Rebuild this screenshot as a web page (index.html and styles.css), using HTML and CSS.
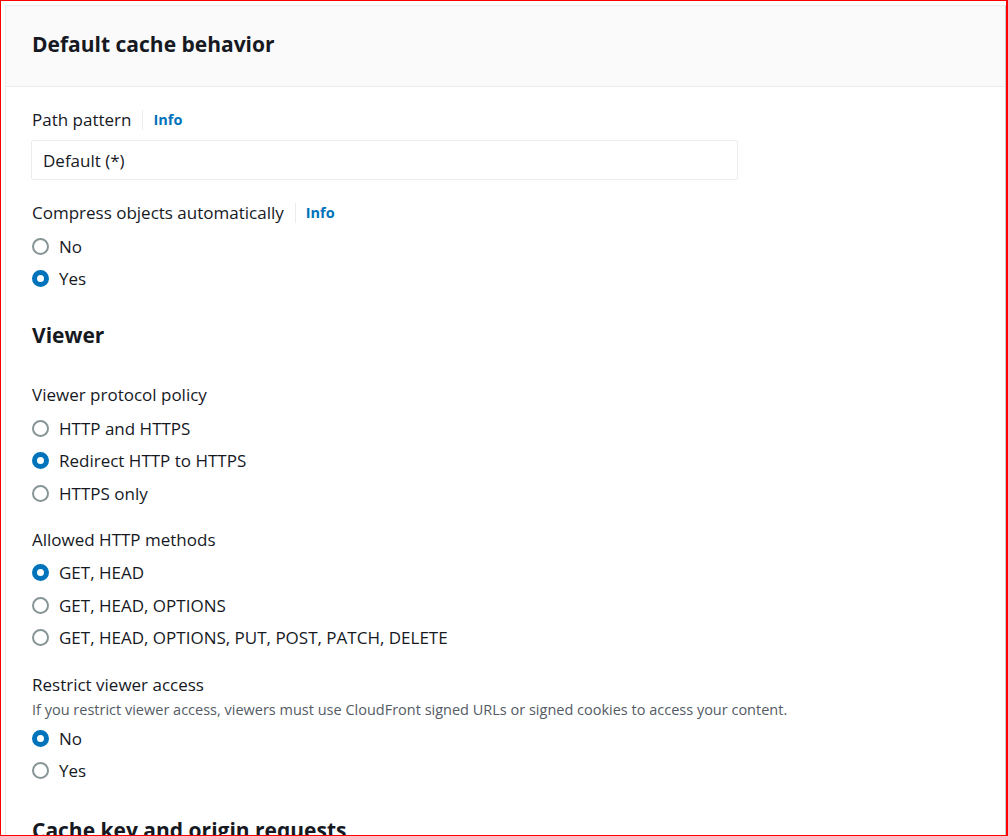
FILE: index.html
```html
<!DOCTYPE html>
<html>
<head>
<meta charset="utf-8">
<link rel="stylesheet" href="styles.css">
</head>
<body>
<div class="frame">
  <div class="panel">
    <div class="panel-header">
      <h2 class="panel-title">Default cache behavior</h2>
    </div>
    <div class="panel-body">
      <div class="field field-first">
        <div class="label-row"><span class="label">Path pattern</span><span class="sep"></span><a class="info">Info</a></div>
        <div class="input">Default (*)</div>
      </div>

      <div class="field field-compress">
        <div class="label-row"><span class="label">Compress objects automatically</span><span class="sep"></span><a class="info">Info</a></div>
        <div class="radios">
          <div class="radio-row"><span class="radio"></span><span>No</span></div>
          <div class="radio-row"><span class="radio checked"></span><span>Yes</span></div>
        </div>
      </div>

      <h3 class="section-title">Viewer</h3>

      <div class="field field-viewer">
        <div class="label-row"><span class="label">Viewer protocol policy</span></div>
        <div class="radios">
          <div class="radio-row"><span class="radio"></span><span>HTTP and HTTPS</span></div>
          <div class="radio-row"><span class="radio checked"></span><span>Redirect HTTP to HTTPS</span></div>
          <div class="radio-row"><span class="radio"></span><span>HTTPS only</span></div>
        </div>
      </div>

      <div class="field field-next">
        <div class="label-row"><span class="label">Allowed HTTP methods</span></div>
        <div class="radios">
          <div class="radio-row"><span class="radio checked"></span><span>GET, HEAD</span></div>
          <div class="radio-row"><span class="radio"></span><span>GET, HEAD, OPTIONS</span></div>
          <div class="radio-row"><span class="radio"></span><span>GET, HEAD, OPTIONS, PUT, POST, PATCH, DELETE</span></div>
        </div>
      </div>

      <div class="field field-next field-restrict">
        <div class="label-row"><span class="label">Restrict viewer access</span></div>
        <div class="desc">If you restrict viewer access, viewers must use CloudFront signed URLs or signed cookies to access your content.</div>
        <div class="radios radios-tight">
          <div class="radio-row"><span class="radio checked"></span><span>No</span></div>
          <div class="radio-row"><span class="radio"></span><span>Yes</span></div>
        </div>
      </div>

      <h3 class="section-title section-title-last">Cache key and origin requests</h3>
    </div>
  </div>
</div>
</body>
</html>
```

FILE: styles.css
```css
html, body {
  margin: 0;
  padding: 0;
  background: #ffffff;
}

body {
  font-family: "Open Sans", "Noto Sans", sans-serif;
  color: #16191f;
  font-size: 17px;
}

.frame {
  box-sizing: border-box;
  width: 1008px;
  height: 836px;
  border: 1px solid #ff0000;
  border-right-width: 2px;
  padding: 4px 0 0 4px;
  overflow: hidden;
  background: #ffffff;
}

.panel {
  border: 1px solid #eaeded;
  border-right-color: #c8cccc;
  border-bottom: none;
  height: 900px;
  background: #ffffff;
}

.panel-header {
  box-sizing: border-box;
  height: 81px;
  background: #fafafa;
  border-bottom: 1px solid #eaeded;
  display: flex;
  align-items: center;
  padding: 0 0 5px 26px;
}

.panel-title {
  margin: 0;
  font-size: 21px;
  font-weight: 700;
  line-height: 30px;
}

.panel-body {
  padding: 22px 0 0 26px;
}

.label-row {
  display: flex;
  align-items: center;
  height: 22px;
  line-height: 22px;
}

.sep {
  width: 1px;
  height: 20px;
  background: #eaeded;
  margin: 0 10px 0 11px;
}

.info {
  color: #0073bb;
  font-weight: 700;
  font-size: 14.5px;
  text-decoration: none;
}

.input {
  box-sizing: border-box;
  width: 707px;
  height: 40px;
  margin-top: 9px;
  margin-left: -1px;
  border: 1px solid #eaeded;
  border-radius: 2px;
  padding-left: 11px;
  display: flex;
  align-items: center;
}

.field-compress {
  margin-top: 22px;
}

.radios {
  margin-top: 6px;
}

.radios-tight {
  margin-top: 2px;
}

.radio-row {
  height: 32.5px;
  display: flex;
  align-items: center;
}

.radio {
  box-sizing: border-box;
  width: 17px;
  height: 17px;
  border-radius: 50%;
  border: 2px solid #879596;
  background: #ffffff;
  margin-right: 10px;
  flex: none;
}

.radio.checked {
  border: 5.5px solid #0073bb;
}

.section-title {
  margin: 25px 0 0 0;
  font-size: 21px;
  font-weight: 700;
  line-height: 30px;
}

.field-viewer {
  margin-top: 34px;
}

.field-next {
  margin-top: 19px;
}

.field-restrict {
  margin-top: 20px;
}

.desc {
  font-size: 14.5px;
  line-height: 20px;
  color: #545b64;
  margin-top: 4px;
}

.section-title-last {
  margin-top: 28px;
}
```
